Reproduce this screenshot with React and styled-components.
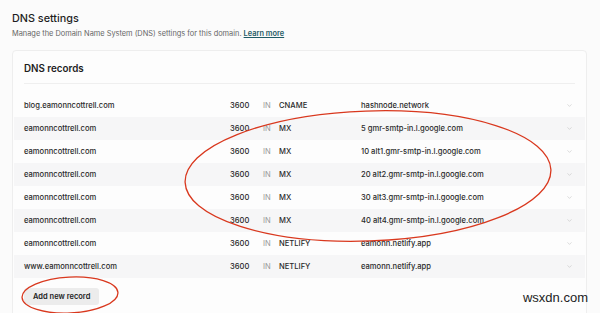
import React from 'react';
import styled, {createGlobalStyle} from 'styled-components';
import {ChevronDown} from 'lucide-react';

const GlobalStyle = createGlobalStyle`
  html, body {
    margin: 0;
    padding: 0;
    background: #fbfbfb;
    font-family: Inter, "Noto Sans", sans-serif;
    color: #2b2b2b;
  }
`

const Page = styled.div`
  position: relative;
  width: 600px;
  height: 313px;
  overflow: hidden;
  padding: 11px 0 0 12px;
  box-sizing: border-box;
`

const Title = styled.h1`
  margin: 0;
  font-size: 10.8px;
  font-weight: 500;
  line-height: 15px;
  color: #1e1e1e;
`

const Subtitle = styled.p`
  margin: 2px 0 0;
  font-size: 7.4px;
  line-height: 12px;
  color: #666;

  a {
    color: #1f5b66;
    font-weight: 600;
    text-decoration: underline;
  }
`

const Card = styled.section`
  margin-top: 10px;
  width: 575px;
  height: 280px;
  background: #fdfdfd;
  border: 1px solid #eeeeee;
  border-radius: 4px;
  box-sizing: border-box;
  padding: 0 1px;
`

const CardHeader = styled.h2`
  margin: 0 10px;
  padding: 11px 0 7px;
  font-size: 9.8px;
  font-weight: 600;
  line-height: 14px;
  color: #1e1e1e;
  border-bottom: 1px solid #efefef;
`

const Records = styled.div`
  margin-top: 10px;
  display: flex;
  flex-direction: column;
`

const Row = styled.div`
  display: grid;
  grid-template-columns: 206px 33px 16px 82px 1fr 12px;
  align-items: center;
  height: 23px;
  padding: 0 7px 0 10px;
  font-size: 7.6px;
  background: ${p => p.$striped ? '#f6f6f7' : 'transparent'};
`

const Cell = styled.span`
  white-space: nowrap;
  color: ${p => p.$muted ? '#999' : '#2a2a2a'};
  font-weight: ${p => p.$muted ? 400 : 500};
`

const Chevron = styled(ChevronDown)`
  color: #b0b0b0;
`

const AddButton = styled.button`
  margin: 10px 0 0 10px;
  height: 17px;
  padding: 0 9px;
  border: none;
  border-radius: 3px;
  background: #ececec;
  font-family: inherit;
  font-size: 7.5px;
  font-weight: 600;
  color: #222;
`

const Annotation = styled.svg`
  position: absolute;
  left: 0;
  top: 0;
  pointer-events: none;
`

const Watermark = styled.div`
  position: absolute;
  right: 12px;
  bottom: 8px;
  font-family: "Liberation Sans", Arial, sans-serif;
  font-size: 13px;
  color: #222;
`

const records = [
    ['blog.eamonncottrell.com', 'CNAME', 'hashnode.network'],
    ['eamonncottrell.com', 'MX', '5 gmr-smtp-in.l.google.com'],
    ['eamonncottrell.com', 'MX', '10 alt1.gmr-smtp-in.l.google.com'],
    ['eamonncottrell.com', 'MX', '20 alt2.gmr-smtp-in.l.google.com'],
    ['eamonncottrell.com', 'MX', '30 alt3.gmr-smtp-in.l.google.com'],
    ['eamonncottrell.com', 'MX', '40 alt4.gmr-smtp-in.l.google.com'],
    ['eamonncottrell.com', 'NETLIFY', 'eamonn.netlify.app'],
    ['www.eamonncottrell.com', 'NETLIFY', 'eamonn.netlify.app'],
]

export default function App() {
    return (
        <>
            <GlobalStyle/>
            <Page>
                <Title>DNS settings</Title>
                <Subtitle>
                    Manage the Domain Name System (DNS) settings for this domain. <a href="#">Learn more</a>
                </Subtitle>
                <Card>
                    <CardHeader>DNS records</CardHeader>
                    <Records>
                        {records.map(([name, type, value], i) => (
                            <Row key={i} $striped={i % 2 === 1}>
                                <Cell>{name}</Cell>
                                <Cell>3600</Cell>
                                <Cell $muted>IN</Cell>
                                <Cell>{type}</Cell>
                                <Cell>{value}</Cell>
                                <Chevron size={7} strokeWidth={1.5}/>
                            </Row>
                        ))}
                    </Records>
                    <AddButton>Add new record</AddButton>
                </Card>
                <Annotation width="600" height="313" viewBox="0 0 600 313">
                    <ellipse cx="368" cy="176" rx="183" ry="65" transform="rotate(-2 368 176)"
                             fill="none" stroke="#d9381e" strokeWidth="1.3"/>
                    <ellipse cx="70" cy="295" rx="48" ry="18" transform="rotate(-3 70 295)"
                             fill="none" stroke="#d9381e" strokeWidth="1.3"/>
                </Annotation>
                <Watermark>wsxdn.com</Watermark>
            </Page>
        </>
    )
}
